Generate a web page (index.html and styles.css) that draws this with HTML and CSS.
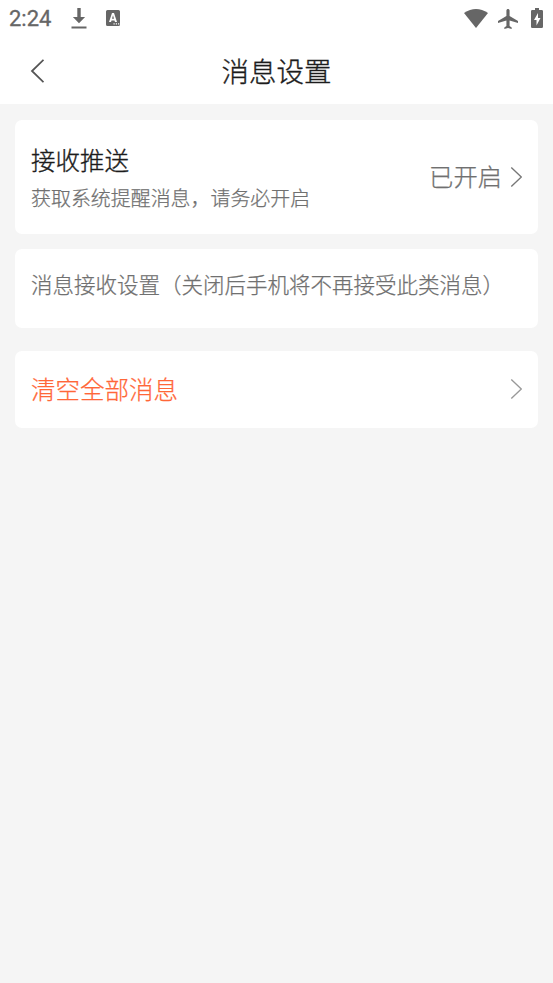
FILE: index.html
```html
<!DOCTYPE html>
<html lang="zh-CN">
<head>
<meta charset="utf-8">
<title>消息设置</title>
<link rel="stylesheet" href="styles.css">
</head>
<body>
<div class="status">
  <span class="time">2:24</span>
  <svg class="download" width="16" height="21" viewBox="0 0 16 21"><path d="M6.300 0h3.400v9h4.400L8 15.300 1.900 9h4.400zM.5 18.500h15v2H.5z"/></svg>
  <svg class="badge" width="14" height="16" viewBox="0 0 14 16"><path fill-rule="evenodd" d="M1.500 0h11Q14 0 14 1.500v13Q14 16 12.500 16h-11Q0 16 0 14.500v-13Q0 0 1.500 0zM6 3 3 12h2l.5-1.600h3L9 12h2L8 3zM7 5.300 8 8.800H6zM7.500 13.200v1.200h1.200v-1.200zM9.800 13.200v1.200H11v-1.200zM12 13.200v1.200h1.200v-1.200z"/></svg>
  <span class="spacer"></span>
  <svg class="wifi" width="24" height="19" viewBox="0 0 24 19"><path d="M0 4Q12-4 24 4L12 19z"/></svg>
  <svg class="plane" width="20" height="20" viewBox="2 2 19 20" preserveAspectRatio="none"><path d="M21 16v-2l-8-5V3.500C13 2.670 12.330 2 11.500 2S10 2.670 10 3.500V9l-8 5v2l8-2.500V19l-2 1.500V22l3.500-1 3.500 1v-1.500L13 19v-5.500z"/></svg>
  <svg class="battery" width="12" height="20" viewBox="0 0 12 20"><path fill-rule="evenodd" d="M4 0h4v2h2.700Q12 2 12 3.300v15.400Q12 20 10.700 20H1.300Q0 20 0 18.700V3.300Q0 2 1.300 2H4zM7 5l-4 7h2.500v5.500L9.500 10H7z"/></svg>
</div>
<header class="header">
  <svg class="back" width="14" height="24" viewBox="0 0 14 24"><path d="M13.500 .800 2 12l11.500 11.200"/></svg>
  <h1>消息设置</h1>
</header>
<main>
  <section class="card push">
    <div class="copy"><div class="title">接收推送</div><div class="sub">获取系统提醒消息，请务必开启</div></div>
    <span class="state">已开启</span>
    <svg class="arrow" width="12" height="20" viewBox="0 0 12 20"><path d="m1.300 .600 10 9.400-10 9.400"/></svg>
  </section>
  <section class="card note">消息接收设置（关闭后手机将不再接受此类消息）</section>
  <section class="card clear"><span>清空全部消息</span>
    <svg class="arrow light" width="12" height="20" viewBox="0 0 12 20"><path d="m1.300 .600 10 9.400-10 9.400"/></svg>
  </section>
</main>
</body>
</html>
```
FILE: styles.css
```css
* { box-sizing: border-box; }
body { margin: 0; height: 983px; background: #f5f5f5; font-family: "Noto Sans CJK SC", sans-serif; font-weight: 300; overflow: hidden; -webkit-text-stroke: .25px currentColor; }
svg { display: block; flex: none; }
.status { height: 38px; background: #fff; display: flex; align-items: center; padding: 0 10px 2px 9px; fill: #666; }
.time { font: 400 22px/26px Roboto, sans-serif; color: #666; width: 62px; padding-top: 2px; -webkit-text-stroke: .3px currentColor; }
.download { margin-top: 1px; }
.badge { margin-left: 19px; }
.spacer { flex: 1; }
.plane { margin-left: 10px; margin-top: 1px; }
.battery { margin-left: 13px; }
.header { height: 66px; background: #fff; display: flex; align-items: center; padding: 0 30px; }
.header h1 { flex: 1; margin: -3px 14px 0 0; text-align: center; font-size: 27.500px; line-height: 40px; font-weight: 300; color: #1c1c1c; -webkit-text-stroke: .35px currentColor; }
.back, .arrow { fill: none; stroke: #555; stroke-width: 1.800; }
.arrow { stroke: #777; stroke-width: 1.400; }
main { padding: 16px 15px; }
.card { background: #fff; border-radius: 7px; padding: 0 16px; display: flex; align-items: center; }
.push { height: 114px; }
.copy { flex: 1; padding-top: 4px; }
.title { font-size: 24.500px; line-height: 38px; color: #1c1c1c; -webkit-text-stroke: .35px currentColor; }
.sub { font-size: 19.950px; line-height: 38px; color: #707070; }
.state { font-size: 24.300px; color: #707070; margin: -4px 8px 0 0; }
.note { height: 79px; margin-top: 15px; padding-bottom: 11px; font-size: 21.500px; color: #707070; white-space: nowrap; }
.clear { height: 77px; margin-top: 23px; font-size: 24.500px; color: #ff6738; justify-content: space-between; }
.clear span { margin-top: -2px; }
.arrow.light { stroke: #999; margin-top: -1px; }
```
